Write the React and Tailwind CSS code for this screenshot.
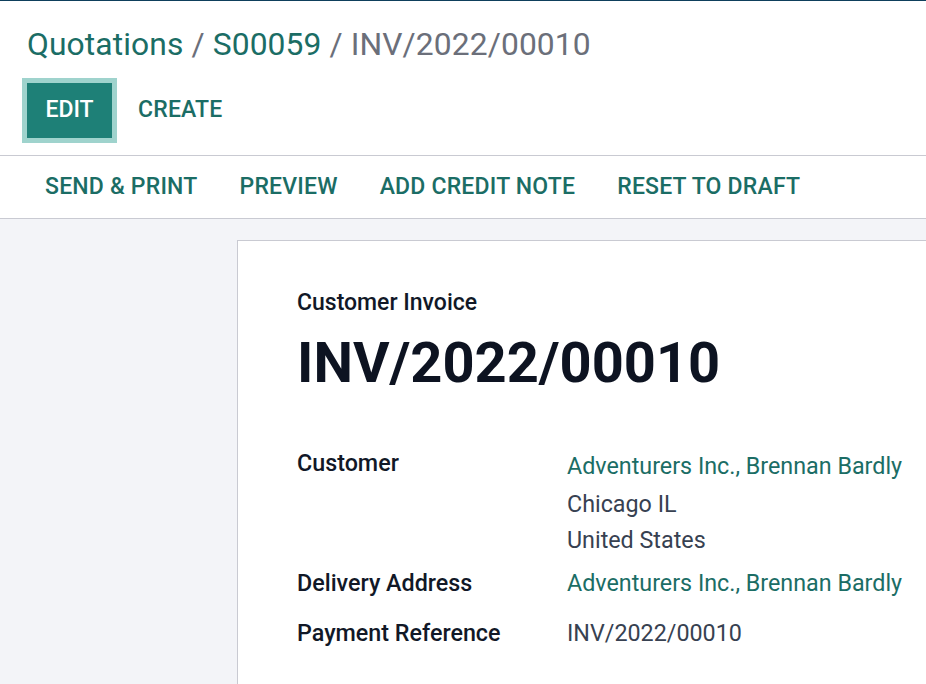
export default function App() {
  const font = { fontFamily: "Roboto, 'Noto Sans', sans-serif" };

  return (
    <div
      className="h-[684px] w-[926px] overflow-hidden bg-[#f3f4f8] border-t border-[#0e3f5c]"
      style={font}
    >
      {/* Control panel */}
      <div className="bg-white border-b border-[#c9cad2]">
        <div className="px-[27px] pt-[24px] pb-[12px]">
          <div className="text-[31.8px] leading-[38px] tracking-[0.1px]">
            <span className="text-[#1b6d65]">Quotations</span>
            <span className="text-[#6b6f7a]"> / </span>
            <span className="text-[#1b6d65]">S00059</span>
            <span className="text-[#6b6f7a]"> / INV/2022/00010</span>
          </div>
          <div className="mt-[15px] flex items-center gap-[21px] -ml-[5px]">
            <button className="h-[65px] w-[95px] border-[5px] border-[#9fd3cd] bg-[#1e8077] text-[23px] font-medium text-white">
              EDIT
            </button>
            <button className="text-[23px] font-medium tracking-[0.2px] text-[#1b6d65]">
              CREATE
            </button>
          </div>
        </div>
      </div>

      {/* Action buttons */}
      <div className="bg-white border-b border-[#c9cad2] h-[63px] flex items-center px-[45px] gap-[42px]">
        {["SEND & PRINT", "PREVIEW", "ADD CREDIT NOTE", "RESET TO DRAFT"].map(
          (label) => (
            <button
              key={label}
              className="text-[23px] font-medium tracking-[0.2px] text-[#1b6d65]"
            >
              {label}
            </button>
          )
        )}
      </div>

      {/* Sheet */}
      <div className="pt-[21px] pl-[237px]">
        <div className="bg-white border border-[#c9cad2] border-r-0 h-[500px] pt-[48px] pl-[59px]">
          <div className="text-[23px] font-medium leading-[28px] text-[#111827]">
            Customer Invoice
          </div>
          <h1 className="mt-[14px] text-[56px] font-bold leading-[64px] text-[#0d1321]">
            INV/2022/00010
          </h1>

          <div className="mt-[52px] grid grid-cols-[270px_1fr] gap-y-[7px] text-[23.3px] leading-[37px]">
            <div className="font-medium text-[#111827] leading-[33px]">
              Customer
            </div>
            <div>
              <div className="text-[#1b6d65] leading-[39px]">
                Adventurers Inc., Brennan Bardly
              </div>
              <div className="text-[#374151] leading-[36px]">Chicago IL</div>
              <div className="text-[#374151] leading-[36px]">United States</div>
            </div>

            <div className="font-medium text-[#111827]">Delivery Address</div>
            <div className="text-[#1b6d65]">
              Adventurers Inc., Brennan Bardly
            </div>

            <div className="mt-[6px] font-medium text-[#111827]">
              Payment Reference
            </div>
            <div className="mt-[6px] text-[#374151]">INV/2022/00010</div>
          </div>
        </div>
      </div>
    </div>
  );
}
